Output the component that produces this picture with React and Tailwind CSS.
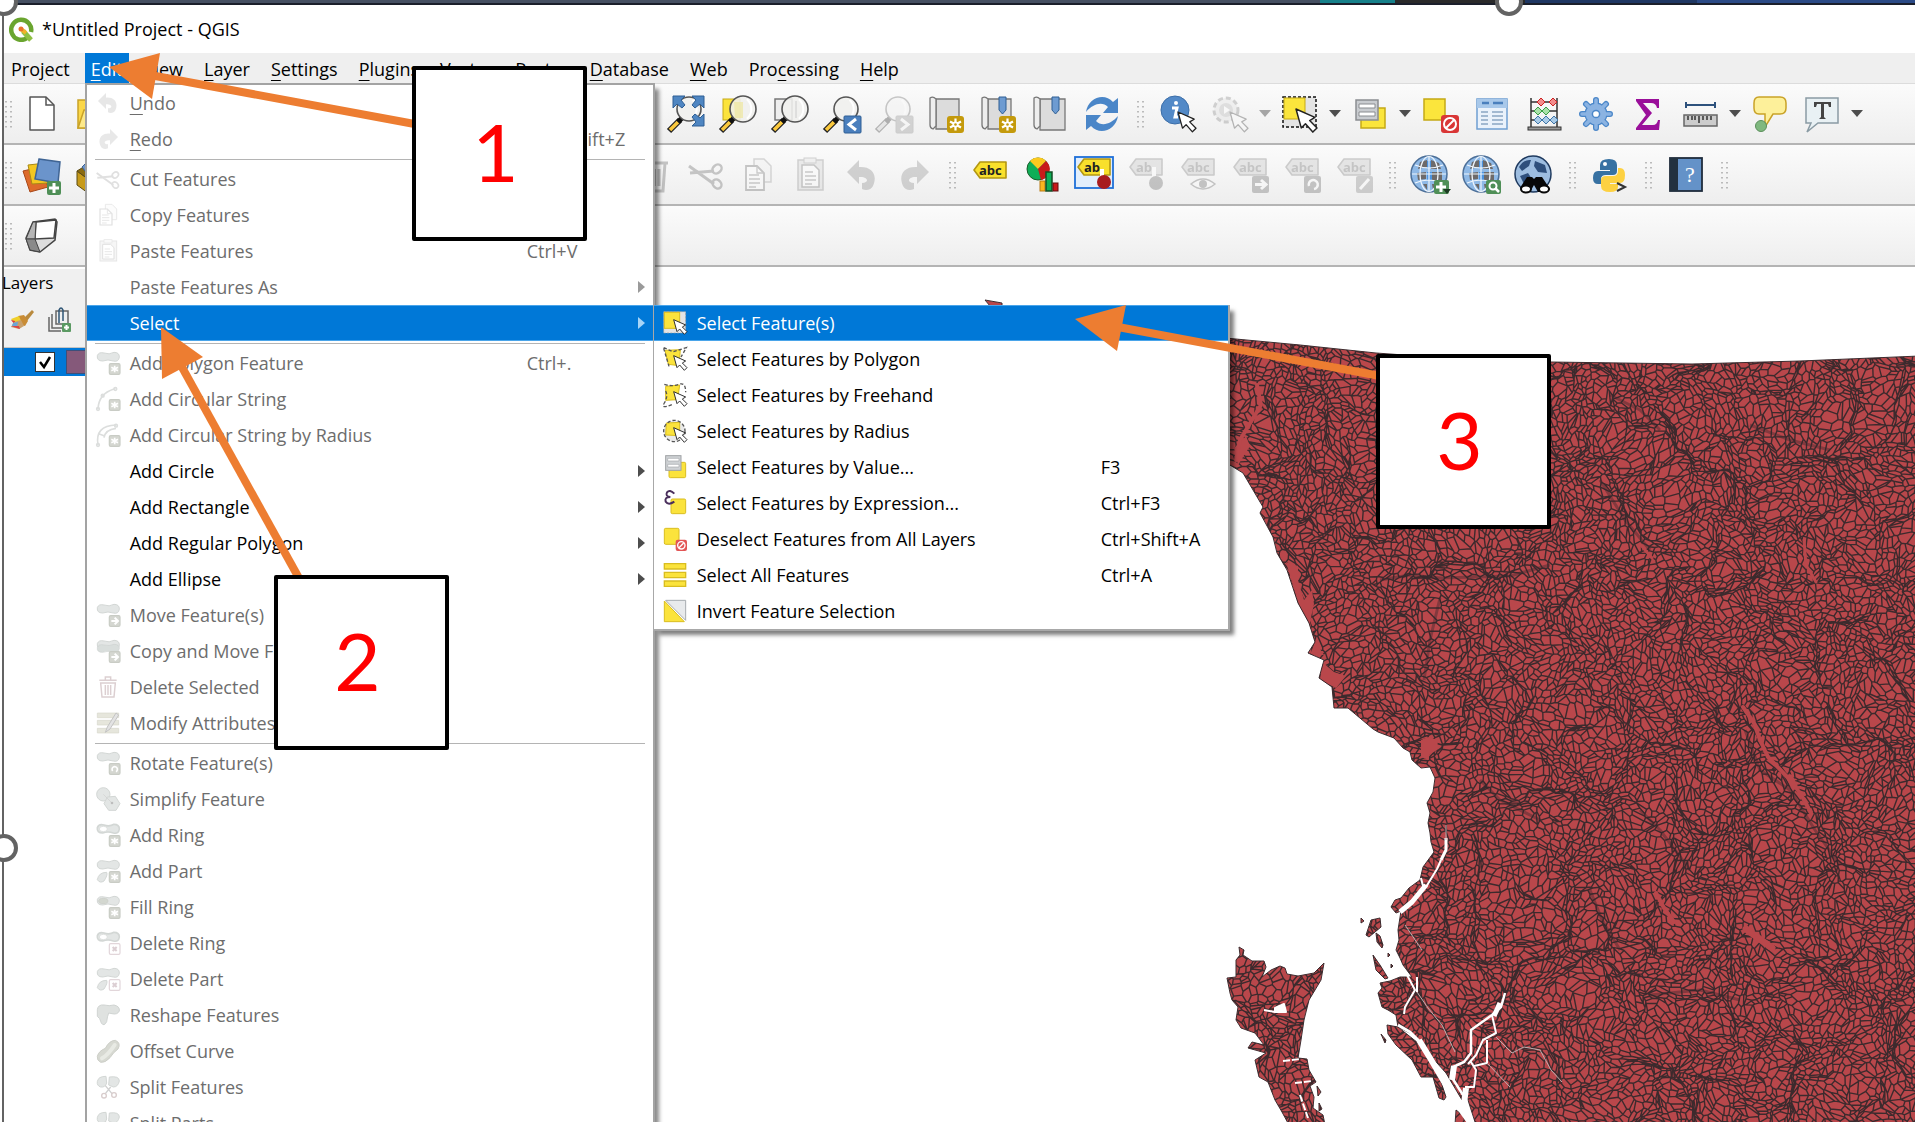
import React from "react";

/* ---------- shared drawing parts ---------- */

function Icon({ children, dim, size = 36 }) {
  return (
    <svg width={size} height={size} viewBox="0 0 36 36" className={dim ? "shrink-0 overflow-visible opacity-30 grayscale" : "shrink-0 overflow-visible"} fill="none" aria-hidden="true">
      {children}
    </svg>
  );
}

function Lens({ cx, cy, r }) {
  return (
    <g>
      <path d="M1 35L12 24" stroke="#222" strokeWidth="6" />
      <path d="M2 34L10 26" stroke="#fbc93d" strokeWidth="3.5" />
      <path d="M10 26L14 22" stroke="#111" strokeWidth="5" />
      <circle cx={cx} cy={cy} r={r} fill="#f0f0ee" fillOpacity="0.88" stroke="#555" strokeWidth="1.6" />
      <path d={`M${cx + r * 0.3} ${cy - r * 0.75}A${r} ${r} 0 0 1 ${cx + r * 0.3} ${cy + r * 0.75}`} stroke="#fff" strokeWidth="2" />
    </g>
  );
}

function StarBadge({ x = 19, y = 19, fill = "#c49a0c" }) {
  return (
    <g transform={`translate(${x} ${y})`}>
      <rect width="17" height="17" rx="3" fill={fill} />
      <path d="M8.5 2.5V14.5M3 5.5L14 11.5M14 5.5L3 11.5" stroke="#fff" strokeWidth="2.2" />
      <circle cx="8.5" cy="8.5" r="3" fill="#fff" />
      <circle cx="8.5" cy="8.5" r="1.3" fill={fill} />
    </g>
  );
}

function Cursor({ x = 16, y = 13, s = 1 }) {
  return <path transform={`translate(${x} ${y}) scale(${s})`} d="M0 0L5 18L9 14L16 22L20 18L13 11L18 8Z" fill="#fff" stroke="#222" strokeWidth="1.4" strokeLinejoin="round" />;
}

function Label({ text = "abc", fill = "#f9e02c", stroke = "#b39712", ink = "#222" }) {
  return (
    <g>
      <path d="M2 10L8 2H34V18H8Z" fill={fill} stroke={stroke} strokeWidth="1.6" strokeLinejoin="round" />
      <text x={text === "ab" ? 8 : 7} y="15" fontFamily="Open Sans, sans-serif" fontWeight="700" fontSize="13" fill={ink}>{text}</text>
    </g>
  );
}

function Globe() {
  return (
    <g>
      <circle cx="17" cy="17" r="18" fill="#8fb9e6" stroke="#4c6f98" strokeWidth="1.5" />
      <path d="M8 5L15 3V10L6 12ZM19 3L27 6L29 12H19ZM5 16L14 15V22L6 23ZM20 15H30V23H20ZM11 27H15V33ZM20 27H26L21 33Z" fill="#6d6a6a" />
      <path d="M15 15H20V23H15ZM15 4H19V11H15Z" fill="#4d94e0" />
      <path d="M17 0V34M0 17H34M3 8Q17 14 31 8M3 26Q17 20 31 26" stroke="#eef5fc" strokeWidth="1.2" />
      <ellipse cx="17" cy="17" rx="9" ry="17.5" stroke="#eef5fc" strokeWidth="1.2" />
    </g>
  );
}

const D = {
  newFile: <Icon><path d="M6 1H22L30 9V34H6Z" fill="#fff" stroke="#555" strokeWidth="1.5" strokeLinejoin="round" /><path d="M22 1V9H30" stroke="#555" strokeWidth="1.5" /></Icon>,
  folder: <Icon><path d="M2 4H16L18 8H34V32H2Z" fill="#fbd748" stroke="#c9a227" strokeWidth="1.5" /><path d="M2 32L8 14H36V32Z" fill="#fde98a" stroke="#c9a227" strokeWidth="1.5" /></Icon>,
  zoomFull: (
    <Icon>
      <Lens cx={21} cy={13} r={12} />
      <g fill="#4f86c2" stroke="#2f5f94" strokeWidth="1">
        <path d="M5 0H17L13 4L17 9L14 12L9 8L5 12Z" />
        <path d="M36 0H24L28 4L24 9L27 12L32 8L36 12Z" />
        <path d="M36 30H24L28 26L24 21L27 18L32 22L36 18Z" />
      </g>
    </Icon>
  ),
  zoomSel: <Icon><rect x="3" y="3" width="17" height="21" fill="#fbe33c" stroke="#c5a916" /><Lens cx={23} cy={13} r={13} /><path d="M14 6H23V22H15Z" fill="#eee7a0" opacity="0.7" /></Icon>,
  zoomLayer: <Icon><rect x="3" y="3" width="17" height="21" fill="#eee" stroke="#777" strokeWidth="1.5" /><Lens cx={23} cy={13} r={13} /><path d="M24 5V22" stroke="#ccc" /></Icon>,
  zoomLast: <Icon><Lens cx={22} cy={13} r={12} /><rect x="20" y="20" width="17" height="17" rx="1" fill="#4a7fbd" stroke="#2f5f94" /><path d="M32 23L25 28.5L32 34" stroke="#fff" strokeWidth="3" /></Icon>,
  zoomNext: <Icon dim><Lens cx={22} cy={13} r={12} /><rect x="20" y="20" width="17" height="17" rx="1" fill="#888" stroke="#777" /><path d="M25 23L32 28.5L25 34" stroke="#fff" strokeWidth="3" /></Icon>,
  newView: <Icon><path d="M8 3H31V33H8Z" fill="#dcdcdc" stroke="#777" strokeWidth="1.3" /><path d="M2 2Q5 0 8 3V30L5 33Q2 32 2 29Z" fill="#eee" stroke="#777" strokeWidth="1.3" /><StarBadge x={19} y={20} /></Icon>,
  newMark: <Icon><path d="M8 3H31V33H8Z" fill="#dcdcdc" stroke="#777" strokeWidth="1.3" /><path d="M2 2Q5 0 8 3V30L5 33Q2 32 2 29Z" fill="#eee" stroke="#777" strokeWidth="1.3" /><path d="M19 1H26V14L22.5 18L19 14Z" fill="#6d9bd1" stroke="#2f5f94" /><StarBadge x={19} y={20} /></Icon>,
  marks: <Icon><path d="M8 3H33V34H8Z" fill="#dcdcdc" stroke="#777" strokeWidth="1.3" /><path d="M2 2Q5 0 8 3V30L5 33Q2 32 2 29Z" fill="#eee" stroke="#777" strokeWidth="1.3" /><path d="M20 1H27V14L23.5 18L20 14Z" fill="#6d9bd1" stroke="#2f5f94" /></Icon>,
  refresh: <Icon><path d="M2 16C4 2 20 -4 29 6L34 2V17H19L24 11C18 5 9 8 2 16Z" fill="#4a86c8" /><path d="M34 20C32 34 16 40 7 30L2 34V19H17L12 25C18 31 27 28 34 20Z" fill="#4a86c8" /></Icon>,
  info: <Icon><circle cx="15" cy="14" r="14" fill="#5289c7" stroke="#3c6ea8" /><circle cx="16" cy="7" r="2" fill="#fff" /><path d="M12 12H17L15 21H18" stroke="#fff" strokeWidth="3" /><Cursor x={18} y={16} s={0.9} /></Icon>,
  action: <Icon dim><circle cx="14" cy="14" r="12" fill="#ddd" stroke="#777" strokeWidth="3" strokeDasharray="5 3" /><circle cx="14" cy="14" r="7" fill="#aaa" /><path d="M12 10L18 14L12 18Z" fill="#fff" /><Cursor x={18} y={16} s={0.9} /></Icon>,
  select: <Icon><rect x="1" y="1" width="33" height="30" fill="#e4e4e4" stroke="#111" strokeWidth="1.5" strokeDasharray="3 2" /><rect x="2" y="2" width="21" height="21" fill="#fbe53c" stroke="#c5a916" /><Cursor x={14} y={13} s={1.05} /></Icon>,
  byValue: <Icon><rect x="9" y="12" width="24" height="20" fill="#fbe53c" stroke="#c5a916" strokeWidth="1.5" /><rect x="4" y="4" width="22" height="20" fill="#c9ccd0" stroke="#8a8d91" strokeWidth="1.5" /><path d="M7 8H23V12H7ZM7 16H23V20H7Z" fill="#fff" stroke="#8a8d91" /></Icon>,
  deselect: <Icon><rect x="2" y="3" width="21" height="21" fill="#fbe53c" stroke="#c5a916" strokeWidth="1.5" /><rect x="19" y="19" width="18" height="18" rx="3" fill="#d93636" /><circle cx="28" cy="28" r="6" stroke="#fff" strokeWidth="2" /><path d="M24 32L32 24" stroke="#fff" strokeWidth="2" /></Icon>,
  table: <Icon><rect x="3" y="3" width="30" height="30" fill="#eaf2fb" stroke="#6f9fd2" strokeWidth="1.5" /><rect x="3" y="3" width="30" height="9" fill="#a8c8ea" /><path d="M8 7H15M19 7H29" stroke="#4a7fbd" strokeWidth="2.5" /><path d="M7 16H14M18 16H29M7 20H14M18 20H29M7 24H14M18 24H29M7 28H14M18 28H29" stroke="#8ba6c4" strokeWidth="1.6" /></Icon>,
  abacus: <Icon><path d="M5 2V31M31 2V31M5 6H31M5 15H31M5 24H31" stroke="#333" strokeWidth="1.5" /><rect x="2" y="31" width="33" height="3" fill="#999" stroke="#333" /><g fill="#f28c8c" stroke="#c22"><path d="M11 6L15 2L19 6L15 10ZM23 6L27 2L31 6L27 10Z" /></g><g fill="#a9e2a9" stroke="#3a9d45"><path d="M8 15L12 11L16 15L12 19ZM16 15L20 11L24 15L20 19Z" /></g><g fill="#a9cbe8" stroke="#4076a8"><path d="M8 24L12 20L16 24L12 28ZM16 24L20 20L24 24L20 28ZM24 24L28 20L32 24L28 28Z" /></g></Icon>,
  gear: <Icon><g stroke="#4a86c8" strokeWidth="6" strokeLinecap="round"><path d="M18 4V32M4 18H32M8 8L28 28M28 8L8 28" /></g><circle cx="18" cy="18" r="11.5" fill="#4a86c8" /><g stroke="#8bb3e2" strokeWidth="3.5" strokeLinecap="round"><path d="M18 4V32M4 18H32M8 8L28 28M28 8L8 28" /></g><circle cx="18" cy="18" r="10.3" fill="#8bb3e2" /><circle cx="18" cy="18" r="3.6" fill="#fff" stroke="#4a86c8" strokeWidth="1.5" /></Icon>,
  sigma: <Icon><path d="M6 3H29V12H27Q26 7 21 7H13L22 17L12 29H23Q27 29 28 24H30L29 34H6V32L16 19L6 5Z" fill="#9a0f9a" /></Icon>,
  measure: <Icon><path d="M4 9H33M4 6V12M33 6V12" stroke="#2d517c" strokeWidth="2" /><rect x="2" y="19" width="33" height="11" fill="#ccc" stroke="#666" strokeWidth="1.5" /><path d="M6 20V24M10 20V24M13 20V24M17 20V27M21 20V24M25 20V24M29 20V24" stroke="#333" strokeWidth="1.5" /></Icon>,
  tips: <Icon><path d="M7 1H28Q34 1 34 7V12Q34 18 28 18H21L13 31V18H7Q2 18 2 12V7Q2 1 7 1Z" fill="#fdf09a" stroke="#c9a227" strokeWidth="1.5" /><circle cx="9" cy="30" r="5.5" fill="#7fb87f" stroke="#5b8f5b" /></Icon>,
  textNote: <Icon><path d="M2 2H34V27H14L3 36L7 27H2Z" fill="#e9f1f4" stroke="#8a9ba4" strokeWidth="1.5" /><path d="M10 6H27V11H25L24 8H20V21L22 23H15L17 21V8H13L12 11H10Z" fill="#444" /></Icon>,

  dataSource: <Icon><path d="M-1 14L16 10L24 30L6 35Z" fill="#dd6b2b" stroke="#a8481a" /><path d="M4 8L22 6L24 26L8 27Z" fill="#f4c720" stroke="#a88a16" /><path d="M15 2L36 5L34 26L11 22Z" fill="#6b94cb" stroke="#3f6494" strokeWidth="1.5" /><rect x="23" y="24" width="14" height="14" rx="2" fill="#4f8f57" /><path d="M30 26V36M25 31H35" stroke="#fff" strokeWidth="3" /></Icon>,
  boxIcon: <Icon><path d="M1 14L12 22V36L1 28Z" fill="#c79a1a" stroke="#5b4a12" /><path d="M12 22L36 14V28L12 36Z" fill="#f4c720" stroke="#5b4a12" /><path d="M1 14L14 6L36 14L12 22Z" fill="#8a6a10" stroke="#5b4a12" /><path d="M6 10L14 2L28 6V14L12 18Z" fill="#6b94cb" stroke="#3f6494" /></Icon>,
  cube: <Icon><path d="M9 4L31 1L33 4L31 22L16 34L6 32L2 20Z" fill="#ddd" stroke="#444" strokeWidth="1.5" /><path d="M12 4L32 2L30 20L11 21Z" fill="#fff" stroke="#444" strokeWidth="1.5" /><path d="M9 4L12 4L11 21L2 21Z" fill="#b5b5b5" stroke="#444" /><path d="M2 21H11L16 34L6 32Z" fill="#8a8a8a" stroke="#444" /></Icon>,
  trash: <Icon dim><path d="M4 6H32M8 6L10 34H27L29 6M14 12V29M18.5 12V29M23 12V29" stroke="#8a3a3a" strokeWidth="3" /></Icon>,
  cut: <Icon dim><path d="M1 9L26 27M2 16L26 14" stroke="#555" strokeWidth="3" /><ellipse cx="29" cy="12" rx="5" ry="4" stroke="#555" strokeWidth="2.5" transform="rotate(-40 29 12)" /><ellipse cx="29" cy="27" rx="5" ry="4" stroke="#555" strokeWidth="2.5" transform="rotate(50 29 27)" /></Icon>,
  copy: <Icon dim><path d="M14 2H24L31 9V25H14Z" fill="#eee" stroke="#888" strokeWidth="1.5" /><path d="M6 9H17L24 16V33H6Z" fill="#fff" stroke="#555" strokeWidth="1.8" /><path d="M9 18H19M9 22H20M9 26H20M9 30H16M17 9V16H24" stroke="#666" strokeWidth="1.3" /></Icon>,
  paste: <Icon dim><rect x="6" y="3" width="25" height="30" fill="#ccc" stroke="#777" strokeWidth="1.5" /><path d="M10 8H22L27 13V30H10Z" fill="#fff" stroke="#555" strokeWidth="1.5" /><rect x="12" y="1" width="12" height="5" fill="#ddd" stroke="#777" /><path d="M13 15H21M13 19H24M13 23H24M13 27H20" stroke="#666" strokeWidth="1.3" /></Icon>,
  undo: <Icon dim><path d="M3 15L15 3V10C28 9 34 18 29 29C27 33 22 34 18 32V26C26 26 24 19 15 20V27Z" fill="#9a7468" /></Icon>,
  redo: <Icon dim><path d="M33 15L21 3V10C8 9 2 18 7 29C9 33 14 34 18 32V26C10 26 12 19 21 20V27Z" fill="#7a8080" /></Icon>,
  abc: <Icon><g transform="translate(0 3)"><Label /></g></Icon>,
  diagram: <Icon><circle cx="14" cy="12" r="11" fill="#0fae57" stroke="#1a5a2a" /><path d="M14 12L6 4A11 11 0 0 1 22 4Z" fill="#fbc91f" /><path d="M14 12L22 4A11 11 0 0 1 17 23Z" fill="#c81a1a" /><rect x="16" y="24" width="5" height="10" fill="#fbb61f" stroke="#b87a12" /><rect x="22" y="15" width="6" height="19" fill="#0fae57" stroke="#124d24" strokeWidth="1.5" /><rect x="29" y="26" width="5" height="8" fill="#c81a1a" stroke="#5e0e0e" /></Icon>,
  pinned: <Icon><rect x="-1" y="0" width="38" height="31" fill="#e2eefb" stroke="#1e6fd8" strokeWidth="1.8" /><Label text="ab" /><path d="M26 12V22" stroke="#fff" strokeWidth="4" /><circle cx="28" cy="25" r="7" fill="#a81c20" /></Icon>,
};

const grayLabel = <Label fill="#bfbca8" stroke="#6d6a58" ink="#555" />;
D.lab1 = <Icon dim><Label text="ab" fill="#bfbca8" stroke="#6d6a58" ink="#555" /><path d="M26 10V20" stroke="#fff" strokeWidth="4" /><circle cx="28" cy="26" r="7" fill="#7a4a4a" /></Icon>;
D.lab2 = <Icon dim>{grayLabel}<path d="M11 27Q23 17 35 27Q23 37 11 27Z" fill="#fff" stroke="#555" strokeWidth="1.5" /><circle cx="23" cy="27" r="4" fill="#555" /></Icon>;
D.lab3 = <Icon dim>{grayLabel}<rect x="20" y="19" width="17" height="17" rx="2" fill="#555" /><path d="M23 27.5H33M29 23L34 27.5L29 32" stroke="#fff" strokeWidth="3" /></Icon>;
D.lab4 = <Icon dim>{grayLabel}<rect x="20" y="19" width="17" height="17" rx="2" fill="#555" /><path d="M25 29A4.5 4.5 0 1 1 30 32" stroke="#fff" strokeWidth="2.5" /></Icon>;
D.lab5 = <Icon dim>{grayLabel}<rect x="20" y="19" width="17" height="17" rx="2" fill="#777" /><path d="M24 32L33 22" stroke="#fff" strokeWidth="3" /></Icon>;
D.globeAdd = <Icon><Globe /><rect x="22" y="23" width="15" height="14" rx="2" fill="#4f8f57" /><path d="M29 25V35M24 30H34" stroke="#fff" strokeWidth="3" /><path d="M31 32H39L35 37Z" fill="#1d3b22" /></Icon>;
D.globeFind = <Icon><Globe /><rect x="22" y="23" width="15" height="14" rx="2" fill="#4f8f57" /><circle cx="29" cy="29" r="3.5" stroke="#fff" strokeWidth="2" /><path d="M31 31L35 35" stroke="#fff" strokeWidth="2.5" /></Icon>;
D.globeBin = <Icon><circle cx="17" cy="17" r="18" fill="#9dbde0" stroke="#1f3a5f" strokeWidth="1.5" /><path d="M3 10Q8 2 15 3L13 9L6 14ZM19 4L29 8L31 16L22 15L18 9ZM4 19L12 16L16 22L8 27Z" fill="#2e4f7c" /><path d="M11 20H16L18 22L20 20H26L34 32L32 35H22L18 28L14 35H6L4 31Z" fill="#080808" /><ellipse cx="10" cy="32" rx="5" ry="3.5" fill="#fff" stroke="#080808" strokeWidth="2" /><ellipse cx="28" cy="32" rx="5" ry="3.5" fill="#fff" stroke="#080808" strokeWidth="2" /></Icon>;
D.python = <Icon><path d="M17 2Q8 2 8 8V13H18V14H6Q1 14 1 21Q1 27 6 27H9V22Q9 18 14 18H21Q25 18 25 14V8Q25 2 17 2Z" fill="#3771a2" /><path d="M18 35Q9 35 9 29V23Q9 19 14 19H21Q26 19 26 14V11H28Q33 11 33 18Q33 26 28 26H18V27H26V30Q26 35 18 35Z" fill="#fdd142" /><circle cx="13" cy="7" r="2" fill="#fff" /><path d="M25 26L33 30L25 34" stroke="#333" strokeWidth="2" /></Icon>;
D.help = <Icon><rect x="2" y="1" width="32" height="33" fill="#6492c8" stroke="#1f2c3b" strokeWidth="1.8" /><rect x="2" y="1" width="8" height="33" fill="#22313f" /><text x="17" y="25" fontFamily="Liberation Serif, serif" fontSize="22" fill="#fff">?</text></Icon>;

/* ---------- toolbars ---------- */

function Tool({ name, icon }) {
  return (
    <button type="button" aria-label={name} className="flex h-9 w-[52px] shrink-0 items-center justify-center">
      {icon}
    </button>
  );
}

function Handle() {
  return (
    <span className="flex w-6 shrink-0 justify-center">
      <svg width="8" height="28" viewBox="0 0 8 28" aria-hidden="true">
        <path d="M2 1V28M7 1V28" stroke="#a8a8a8" strokeWidth="1.5" strokeDasharray="1.5 3.5" />
      </svg>
    </span>
  );
}

function Drop({ dim }) {
  return (
    <button type="button" aria-label="More options" className="flex w-[18px] shrink-0 items-center justify-center">
      <svg width="12" height="7" viewBox="0 0 12 7" aria-hidden="true"><path d="M0 0H12L6 7Z" fill={dim ? "#a5a5a5" : "#4d4d4d"} /></svg>
    </button>
  );
}

function Bar({ children }) {
  return (
    <div className="flex h-[61px] items-center overflow-hidden border-b-2 border-[#b4b4b4] bg-linear-to-b from-[#fbfbfb] to-[#eeeeee]">
      {children}
    </div>
  );
}

function Toolbars() {
  return (
    <div>
      <Bar>
        <div className="-ml-2 flex w-[664px] shrink-0 items-center">
          <Handle /><span className="-ml-1 flex"><Tool name="New project" icon={D.newFile} /><Tool name="Open project" icon={D.folder} /></span>
        </div>
        <Tool name="Zoom full" icon={D.zoomFull} />
        <Tool name="Zoom to selection" icon={D.zoomSel} />
        <Tool name="Zoom to layer" icon={D.zoomLayer} />
        <Tool name="Zoom last" icon={D.zoomLast} />
        <Tool name="Zoom next" icon={D.zoomNext} />
        <Tool name="New map view" icon={D.newView} />
        <Tool name="New bookmark" icon={D.newMark} />
        <Tool name="Show bookmarks" icon={D.marks} />
        <Tool name="Refresh" icon={D.refresh} />
        <Handle />
        <Tool name="Identify features" icon={D.info} />
        <Tool name="Run feature action" icon={D.action} />
        <Drop dim />
        <Tool name="Select features" icon={D.select} />
        <Drop />
        <Tool name="Select by value" icon={D.byValue} />
        <Drop />
        <Tool name="Deselect features" icon={D.deselect} />
        <Tool name="Open attribute table" icon={D.table} />
        <Tool name="Field calculator" icon={D.abacus} />
        <Tool name="Processing toolbox" icon={D.gear} />
        <Tool name="Statistical summary" icon={D.sigma} />
        <Tool name="Measure line" icon={D.measure} />
        <Drop />
        <Tool name="Map tips" icon={D.tips} />
        <Tool name="Text annotation" icon={D.textNote} />
        <Drop />
      </Bar>
      <Bar>
        <div className="-ml-2 flex w-[684px] shrink-0 items-center">
          <Handle /><span className="-ml-1 flex"><Tool name="Data source manager" icon={D.dataSource} /><Tool name="New geopackage" icon={D.boxIcon} /></span>
          <span className="ml-auto flex"><Tool name="Delete selected" icon={D.trash} /></span>
        </div>
        <Tool name="Cut features" icon={D.cut} />
        <Tool name="Copy features" icon={D.copy} />
        <Tool name="Paste features" icon={D.paste} />
        <Tool name="Undo" icon={D.undo} />
        <Tool name="Redo" icon={D.redo} />
        <Handle />
        <Tool name="Labeling options" icon={D.abc} />
        <Tool name="Diagram options" icon={D.diagram} />
        <Tool name="Highlight pinned labels" icon={D.pinned} />
        <Tool name="Pin labels" icon={D.lab1} />
        <Tool name="Show labels" icon={D.lab2} />
        <Tool name="Move label" icon={D.lab3} />
        <Tool name="Rotate label" icon={D.lab4} />
        <Tool name="Change label" icon={D.lab5} />
        <Handle />
        <Tool name="Add web service" icon={D.globeAdd} />
        <Tool name="Search web services" icon={D.globeFind} />
        <Tool name="MetaSearch" icon={D.globeBin} />
        <Handle />
        <Tool name="Python console" icon={D.python} />
        <Handle />
        <Tool name="Help contents" icon={D.help} />
        <Handle />
      </Bar>
      <Bar>
        <div className="-ml-2 flex items-center"><Handle /><span className="-ml-1 flex"><Tool name="Mesh digitizing" icon={D.cube} /></span></div>
      </Bar>
    </div>
  );
}

/* ---------- menu icons ---------- */

const blobFill = { fill: "#e3e6e5", stroke: "#d3d7d5", strokeWidth: 1.5 };
const BLOB = "M2 7Q4 1 12 3Q20 6 27 2Q35 2 35 9Q34 17 26 15Q18 12 10 15Q1 15 2 7Z";

function Edit({ kind, badge }) {
  return (
    <svg width="24" height="24" viewBox="0 0 36 36" fill="none" className="overflow-visible" aria-hidden="true">
      {kind === "blob" && <path d={BLOB} {...blobFill} />}
      {kind === "blob2" && <g><path d={BLOB} {...blobFill} /><path d="M2 13Q4 7 12 9Q20 11 27 8Q35 8 35 14Q34 21 26 20Q18 17 10 20Q1 20 2 13Z" fill="#d9dedc" stroke="#cdd2d0" /></g>}
      {kind === "ring" && <g><path d={BLOB} {...blobFill} strokeWidth="2.5" /><ellipse cx="11" cy="9" rx="6" ry="4" fill="#fff" stroke="#d3d7d5" /></g>}
      {kind === "fill" && <g><path d={BLOB} {...blobFill} /><ellipse cx="11" cy="9" rx="7" ry="4" fill="#d3d7d0" stroke="#c8ccc5" /></g>}
      {kind === "part" && <g><path d={BLOB} {...blobFill} /><path d="M2 31Q4 20 16 20Q18 24 12 33Q6 37 2 31Z" {...blobFill} /></g>}
      {kind === "arc" && <g stroke="#dcdedd" strokeWidth="2.5"><path d="M3 33Q4 10 27 3" /><circle cx="3" cy="33" r="2" /><circle cx="10" cy="13" r="2" /><circle cx="29" cy="3" r="2" /></g>}
      {kind === "arc2" && <g stroke="#dcdedd" strokeWidth="2.5"><path d="M3 33Q-2 4 30 3M12 22Q14 10 30 8M4 16L14 20" /><circle cx="3" cy="33" r="2" /><circle cx="30" cy="4" r="2" /></g>}
      {kind === "simplify" && <g><circle cx="11" cy="11" r="10" {...blobFill} /><path d="M17 15L29 14L36 25L30 35H19L12 25Z" {...blobFill} /><path d="M11 11L24 24" stroke="#cfcfcf" /><circle cx="24" cy="24" r="2" fill="#bdbdbd" /></g>}
      {kind === "reshape" && <path d="M2 10Q3 2 12 3Q20 5 27 3Q36 5 35 12Q32 18 24 16L19 15Q17 20 16 28Q12 36 8 30Q6 22 2 20Z" fill="#dfe2e0" stroke="#d0d4d2" strokeWidth="1.5" />}
      {kind === "offset" && <g><path d="M2 26Q4 18 14 14Q20 2 29 2Q38 6 33 15Q26 20 21 28Q14 36 7 35Q1 32 2 26Z" fill="#d7d9d2" stroke="#cdcfc8" strokeWidth="1.5" /><path d="M9 29Q18 24 28 9" stroke="#e8eae4" strokeWidth="6" strokeLinecap="round" /></g>}
      {kind === "split" && <g><path d="M2 10Q3 2 15 2L16 12Q14 19 7 18Q1 16 2 10Z" {...blobFill} /><path d="M20 3Q35 1 35 9Q33 18 26 18L19 15Z" {...blobFill} /><path d="M14 16L24 28M22 18L14 28" stroke="#d0d0d0" strokeWidth="2" /><circle cx="12" cy="31" r="3.5" stroke="#d8cccc" strokeWidth="2" /><circle cx="27" cy="30" r="3.5" stroke="#d8cccc" strokeWidth="2" /></g>}
      {kind === "trash" && <g stroke="#dccfd1" strokeWidth="2.2"><path d="M5 8H31M14 7V3H22V7M7 12L9 33H27L29 12ZM14 15V30M18 15V30M22 15V30" /></g>}
      {kind === "modify" && <g><path d="M2 3H34V10H2ZM2 14H34V21H2ZM2 26H34V33H2Z" fill="#e6e6dc" stroke="#d8d8cc" /><path d="M14 32L17 24L30 3L34 6L21 27Z" fill="#e3e3e3" stroke="#c4c4c4" strokeWidth="1.5" /></g>}
      {badge && <rect x="20" y="19" width="16" height="16" rx="2" fill={badge === "x" ? "#fff" : "#d5d7d1"} stroke={badge === "x" ? "#e2d6da" : "#c9ccc5"} strokeWidth="1.8" />}
      {badge === "star" && <path d="M28 22V32M23 24.5L33 29.5M33 24.5L23 29.5" stroke="#fff" strokeWidth="2.5" />}
      {badge === "move" && <path d="M23 27H32M28 22L33 27L28 32" stroke="#fff" strokeWidth="3" />}
      {badge === "turn" && <path d="M25 30A4 4 0 1 1 30 31" stroke="#fff" strokeWidth="2.5" />}
      {badge === "x" && <path d="M25 24L31 30M31 24L25 30" stroke="#dccfd3" strokeWidth="3" />}
    </svg>
  );
}

function Mini({ children }) {
  return <svg width="24" height="24" viewBox="0 0 36 36" fill="none" className="overflow-visible" aria-hidden="true">{children}</svg>;
}
const yellow = { fill: "#fbe33c", stroke: "#d9bd20", strokeWidth: 1.5 };
const dash = { stroke: "#555", strokeWidth: 2, strokeDasharray: "5 3" };

const S = {
  select: <Mini><rect x="1" y="1" width="33" height="32" fill="#e4e4e4" stroke="#999" strokeDasharray="3 2" /><rect x="2" y="2" width="23" height="24" {...yellow} /><Cursor x={16} y={13} /></Mini>,
  polygon: <Mini><path d="M3 5L26 4L24 28L8 26Z" {...yellow} /><path d="M1 1L15 7L35 1L27 15M1 2L9 29" {...dash} /><Cursor x={16} y={13} /></Mini>,
  freehand: <Mini><path d="M4 5L25 3L22 25L4 26Z" {...yellow} /><path d="M2 2Q14 6 24 2T34 14M4 12Q8 20 2 30T14 32" {...dash} /><Cursor x={16} y={13} /></Mini>,
  radius: <Mini><circle cx="17" cy="18" r="16" fill="#e9e9e9" /><path d="M5 6L25 5L25 25L4 24Z" {...yellow} /><circle cx="17" cy="18" r="16" {...dash} /><Cursor x={16} y={13} /></Mini>,
  value: <Mini><rect x="9" y="11" width="25" height="23" rx="2" {...yellow} /><rect x="4" y="1" width="23" height="22" fill="#cfd2d5" stroke="#9fa2a5" strokeWidth="1.5" /><path d="M7 5H24V9H7ZM7 14H24V18H7Z" fill="#fff" stroke="#a5a8ab" /></Mini>,
  expr: <Mini><rect x="12" y="12" width="22" height="22" rx="2" {...yellow} /><path d="M17 4Q10 -3 6 2Q3 8 11 9Q2 9 4 16Q8 22 17 16" stroke="#4a2f5c" strokeWidth="3" /></Mini>,
  deselect: <Mini><rect x="2" y="2" width="22" height="24" rx="2" {...yellow} /><rect x="19" y="19" width="17" height="17" rx="3" fill="#e25555" /><circle cx="27.5" cy="27.5" r="5.5" stroke="#fff" strokeWidth="2" /><path d="M24 31L31 24" stroke="#fff" strokeWidth="2" /></Mini>,
  all: <Mini><path d="M2 1H34V9H2ZM2 14H34V22H2ZM2 27H34V35H2Z" {...yellow} strokeWidth="2" /></Mini>,
  invert: <Mini><path d="M4 2H34V32Z" fill="#e8eaec" stroke="#a7abb0" strokeWidth="1.5" /><path d="M2 3L32 34H2Z" {...yellow} /></Mini>,
};

/* ---------- menus ---------- */

const FEATURE_ITEMS = [
  { icon: S.select, label: "Select Feature(s)", on: true },
  { icon: S.polygon, label: "Select Features by Polygon" },
  { icon: S.freehand, label: "Select Features by Freehand" },
  { icon: S.radius, label: "Select Features by Radius" },
  { icon: S.value, label: "Select Features by Value...", keys: "F3" },
  { icon: S.expr, label: "Select Features by Expression...", keys: "Ctrl+F3" },
  { icon: S.deselect, label: "Deselect Features from All Layers", keys: "Ctrl+Shift+A" },
  { icon: S.all, label: "Select All Features", keys: "Ctrl+A" },
  { icon: S.invert, label: "Invert Feature Selection" },
];

function MiniDim({ of }) {
  return <svg width="24" height="24" viewBox="0 0 36 36" className="opacity-60" aria-hidden="true">{of}</svg>;
}

const EDIT_ITEMS = [
  { icon: <MiniDim of={D.undo} />, label: "Undo", key: true, off: true },
  { icon: <MiniDim of={D.redo} />, label: "Redo", key: true, keys: "Ctrl+Shift+Z", off: true },
  { line: true },
  { icon: <MiniDim of={D.cut} />, label: "Cut Features", off: true },
  { icon: <MiniDim of={D.copy} />, label: "Copy Features", off: true },
  { icon: <MiniDim of={D.paste} />, label: "Paste Features", keys: "Ctrl+V", off: true },
  { label: "Paste Features As", off: true, more: true },
  { label: "Select", on: true, more: true, sub: FEATURE_ITEMS },
  { line: true },
  { icon: <Edit kind="blob" badge="star" />, label: "Add Polygon Feature", keys: "Ctrl+.", off: true },
  { icon: <Edit kind="arc" badge="star" />, label: "Add Circular String", off: true },
  { icon: <Edit kind="arc2" badge="star" />, label: "Add Circular String by Radius", off: true },
  { label: "Add Circle", more: true },
  { label: "Add Rectangle", more: true },
  { label: "Add Regular Polygon", more: true },
  { label: "Add Ellipse", more: true },
  { icon: <Edit kind="blob" badge="move" />, label: "Move Feature(s)", off: true },
  { icon: <Edit kind="blob2" badge="move" />, label: "Copy and Move Feature(s)", off: true },
  { icon: <Edit kind="trash" />, label: "Delete Selected", off: true },
  { icon: <Edit kind="modify" />, label: "Modify Attributes", off: true },
  { line: true },
  { icon: <Edit kind="blob" badge="turn" />, label: "Rotate Feature(s)", off: true },
  { icon: <Edit kind="simplify" />, label: "Simplify Feature", off: true },
  { icon: <Edit kind="ring" badge="star" />, label: "Add Ring", off: true },
  { icon: <Edit kind="part" badge="star" />, label: "Add Part", off: true },
  { icon: <Edit kind="fill" badge="star" />, label: "Fill Ring", off: true },
  { icon: <Edit kind="ring" badge="x" />, label: "Delete Ring", off: true },
  { icon: <Edit kind="part" badge="x" />, label: "Delete Part", off: true },
  { icon: <Edit kind="reshape" />, label: "Reshape Features", off: true },
  { icon: <Edit kind="offset" />, label: "Offset Curve", off: true },
  { icon: <Edit kind="split" />, label: "Split Features", off: true },
  { icon: <Edit kind="split" />, label: "Split Parts", off: true },
];

function MenuRow({ item, wide }) {
  if (item.line) {
    return <li role="separator" className="flex h-1 items-center px-2"><span className="h-px w-full bg-[#b4b4b4]" /></li>;
  }
  const tone = item.on ? "border-[#4aa5ea] bg-[#0078d7] text-white" : item.off ? "border-transparent text-[#6d6d6d]" : "border-transparent text-black";
  return (
    <li role="none" className="relative">
      <button type="button" role="menuitem" aria-disabled={item.off ? "true" : undefined} className={"flex h-9 w-full items-center border-y text-left whitespace-nowrap " + tone}>
        <span className="flex w-[43px] shrink-0 justify-center">{item.icon}</span>
        <span className="flex-1">
          {item.key ? <><span className="underline underline-offset-4">{item.label[0]}</span>{item.label.slice(1)}</> : item.label}
        </span>
        <span className={wide ? "w-[127px]" : "w-[104px]"}>{item.keys}</span>
        {!wide && (
          <span className="flex w-[22px] justify-center">
            {item.more && <svg width="7" height="12" viewBox="0 0 7 12" aria-hidden="true"><path d="M0 0L7 6L0 12Z" fill={item.on ? "#a6d4f7" : item.off ? "#9a9a9a" : "#4d4d4d"} /></svg>}
          </span>
        )}
      </button>
      {item.sub && (
        <ul role="menu" aria-label={item.label} className="absolute top-0 left-full w-[577px] border-r-2 border-b-2 border-l border-[#a8a8a8] bg-white shadow-[5px_5px_4px_-1px_rgba(0,0,0,0.5)]">
          {item.sub.map((s) => <MenuRow key={s.label} item={s} wide />)}
        </ul>
      )}
    </li>
  );
}

function EditMenu() {
  return (
    <ul role="menu" aria-label="Edit" className="absolute top-full left-0 z-20 w-[570px] border-2 border-[#a3a3a3] bg-white text-lg leading-6 shadow-[5px_5px_4px_-1px_rgba(0,0,0,0.45)]">
      {EDIT_ITEMS.map((it, i) => <MenuRow key={i} item={it} />)}
    </ul>
  );
}

const MENUS = [["Pro", "j", "ect"], ["", "E", "dit"], ["", "V", "iew"], ["", "L", "ayer"], ["", "S", "ettings"], ["", "P", "lugins"], ["Vect", "o", "r"], ["", "R", "aster"], ["", "D", "atabase"], ["", "W", "eb"], ["Pro", "c", "essing"], ["", "H", "elp"]];

function MenuBar() {
  return (
    <nav className="flex h-[31px] gap-[9px] border-b border-[#dcdcdc] bg-[#efefef] pl-px text-lg leading-6">
      {MENUS.map((m) => {
        const open = m[1] === "E";
        return (
          <div key={m.join("")} className="relative">
            <button type="button" aria-haspopup="menu" className={"h-[31px] px-1.5 whitespace-nowrap " + (open ? "bg-[#0078d7] text-white" : "text-black")}>
              {m[0]}<span className="underline underline-offset-4">{m[1]}</span>{m[2]}
            </button>
            {open && <EditMenu />}
          </div>
        );
      })}
    </nav>
  );
}

/* ---------- layers panel ---------- */

function Layers() {
  return (
    <aside className="flex w-[652px] shrink-0 flex-col bg-white text-[17px] leading-6">
      <div className="flex h-[79px] flex-col border-b border-[#c4c4c4] bg-[#f0f0f0]">
        <h2 className="-ml-0.5 pt-0.5">Layers</h2>
        <div className="flex gap-3.5 pt-3 pl-1.5">
          <button type="button" aria-label="Layer styling">
            <svg width="24" height="26" viewBox="0 0 24 26" aria-hidden="true">
              <path d="M22 3L24 5L17 14L14 11Z" fill="#b98a3e" /><path d="M8 9L14 8L18 14L15 19L8 17Z" fill="#c98c35" />
              <path d="M1 12L9 9L11 14L4 16Z" fill="#f0d02c" /><path d="M1 13L5 14L5 18Z" fill="#de3b3b" /><path d="M4 15L11 13L14 19L9 22L1 20Z" fill="#c9a06a" /><path d="M3 16L8 15L7 20L2 19Z" fill="#6aa5d8" /><path d="M1 19L9 19L10 22Z" fill="#d44" />
            </svg>
          </button>
          <button type="button" aria-label="Add group">
            <svg width="24" height="26" viewBox="0 0 24 26" fill="none" aria-hidden="true">
              <path d="M1 10V24H13M4 7V21H15M8 4H20V17H8Z" stroke="#666" strokeWidth="1.5" /><path d="M11 16V3Q13 -1 15 3V14" stroke="#2f5575" strokeWidth="1.5" />
              <rect x="14" y="16" width="9" height="9" rx="1" fill="#5b9a63" /><path d="M18.5 18V23M16 20.5H21" stroke="#fff" strokeWidth="2" />
            </svg>
          </button>
        </div>
      </div>
      <label className="flex h-7 items-center bg-[#0078d7] pl-[31px]">
        <span className="relative flex h-5 w-5">
          <input type="checkbox" defaultChecked aria-label="Layer visible" className="h-5 w-5 appearance-none border border-[#333] bg-white" />
          <svg width="20" height="20" viewBox="0 0 20 20" fill="none" className="pointer-events-none absolute inset-0" aria-hidden="true"><path d="M5 10L9 15L15 5" stroke="#000" strokeWidth="2.5" /></svg>
        </span>
        <span className="ml-[11px] h-6 w-6 border border-[#3d4f7a] bg-[#85597a]" />
      </label>
    </aside>
  );
}

/* ---------- map ---------- */

const X0 = 1190, Y0 = 300, STEP = 6, COLS = 130, ROWS = 146;

function hash(a, b, c) {
  let h = (a * 374761393 + b * 668265263 + c * 974634777) | 0;
  h = Math.imul(h ^ (h >>> 13), 1274126177);
  h = Math.imul(h ^ (h >>> 15), 2246822519);
  return ((h ^ (h >>> 16)) >>> 0) / 4294967296;
}

function noise(x, y, seed) {
  const i = Math.floor(x), j = Math.floor(y);
  const u = x - i, v = y - j;
  const su = u * u * (3 - 2 * u), sv = v * v * (3 - 2 * v);
  const a = hash(i, j, seed), b = hash(i + 1, j, seed), c = hash(i, j + 1, seed), d = hash(i + 1, j + 1, seed);
  return a + (b - a) * su + (c - a) * sv + (a - b - c + d) * su * sv - 0.5;
}

function warp(x, y) {
  return [
    x + 14 * noise(x / 21, y / 21, 5) + 7 * noise(x / 9, y / 9, 6) + 20 * noise(x / 55, y / 55, 9),
    y + 14 * noise(x / 21, y / 21, 7) + 7 * noise(x / 9, y / 9, 8) + 20 * noise(x / 55, y / 55, 10),
  ];
}

function buildCells() {
  const site = (i, j) => [X0 + (i + hash(i, j, 1) * 1.1) * STEP, Y0 + (j + hash(i, j, 2) * 1.1) * STEP];
  const out = [];
  for (let j = 0; j < ROWS; j++) {
    for (let i = 0; i < COLS; i++) {
      const [px, py] = site(i, j);
      const R = STEP * 2.2;
      let poly = [[px - R, py - R], [px + R, py - R], [px + R, py + R], [px - R, py + R]];
      for (let dj = -2; dj <= 2; dj++) {
        for (let di = -2; di <= 2; di++) {
          if (!di && !dj) continue;
          const [qx, qy] = site(i + di, j + dj);
          const nx = qx - px, ny = qy - py, c = (qx * qx + qy * qy - px * px - py * py) / 2;
          const next = [];
          for (let k = 0; k < poly.length; k++) {
            const a = poly[k], b = poly[(k + 1) % poly.length];
            const fa = a[0] * nx + a[1] * ny - c, fb = b[0] * nx + b[1] * ny - c;
            if (fa <= 0) next.push(a);
            if (fa * fb < 0) {
              const t = fa / (fa - fb);
              next.push([a[0] + (b[0] - a[0]) * t, a[1] + (b[1] - a[1]) * t]);
            }
          }
          poly = next;
        }
      }
      if (poly.length > 2) out.push("M" + poly.map((p) => warp(p[0], p[1]).map((v) => v.toFixed(1)).join(" ")).join("L") + "Z");
    }
  }
  return out.join("");
}

const CELLS = buildCells();

const LAND = [
  "M1225 338L1300 345L1376 353L1460 359L1551 362L1692 364L1800 361L1920 356V1125H1476L1467 1097L1462 1100L1446 1073L1428 1053L1414 1035L1398 1027L1396 1015L1388 1010L1382 1007L1380 1000L1378 993L1382 988L1380 983L1390 981L1400 977L1412 977L1403 965L1400 958L1396 950L1399 940L1398 930L1401 911L1396 913L1391 907L1395 900L1401 898L1409 888L1420 880L1423 867L1434 852L1431 842L1430 833L1428 823L1430 813L1427 803L1433 792L1435 778L1430 767L1421 768L1412 760L1410 752L1403 748L1394 738L1378 732L1373 729L1348 708H1334L1332 687L1319 678L1324 660L1308 653L1315 642L1309 623L1298 603L1287 570L1277 553L1273 537L1260 513L1263 507L1243 473L1225 462Z",
  "M1387 1025L1398 1027L1423 1047L1432 1060L1437 1070L1446 1097L1444 1100L1439 1098L1433 1077L1421 1077L1412 1060L1396 1045L1388 1034Z",
  "M1456 1110L1464 1116L1472 1125H1455Z",
  "M1371 920L1380 918L1381 927L1369 937L1366 935Z",
  "M1376 933L1380 936L1383 945L1382 948L1377 942Z",
  "M1361 918L1364 921L1361 923Z",
  "M1373 955L1380 965L1388 978L1385 979L1376 970Z",
  "M1381 1034L1386 1040L1385 1043Z",
  "M1388 953L1390 955L1388 957ZM1391 964L1393 966L1391 968ZM1317 1086L1321 1092L1318 1096ZM1319 1103L1322 1109L1319 1111Z",
  "M1239 947L1244 950L1243 955L1252 961L1264 961L1266 967L1262 977L1271 970L1280 966L1285 968L1287 974L1298 976L1314 973L1324 963L1321 980L1315 990L1309 1000L1304 1020L1301 1040L1298 1058L1307 1059L1309 1070L1316 1082L1310 1086L1314 1097L1313 1108L1323 1115L1325 1125H1289L1282 1112L1275 1100L1268 1082L1259 1077L1255 1060L1266 1053L1248 1048L1252 1042L1264 1045L1255 1033L1241 1028L1236 1020L1238 1007L1232 1000L1230 993L1227 978L1236 977L1236 960L1240 955Z",
  "M985 300L1002 303V306H990Z",
].join("");

function Map() {
  return (
    <svg viewBox="656 269 1259 853" preserveAspectRatio="xMinYMin slice" fill="none" className="min-w-0 flex-1 bg-white" role="img" aria-label="Watershed polygons">
      <clipPath id="land"><path d={LAND} /></clipPath>
      <g clipPath="url(#land)">
        <path d={LAND} fill="#b9474b" />
        <path d={CELLS} stroke="#3c2a2d" strokeWidth="1.4" strokeLinejoin="round" />
        <g fill="#b9474b">
          <path d="M1421 740L1428 737L1438 740L1437 750L1429 755V760L1421 757Z" />
          <path d="M1286 562L1298 566L1298 580L1304 600L1312 590L1314 604L1310 622L1314 640L1324 655L1310 655L1315 642L1298 603Z" />
          <path d="M1322 662L1334 672L1346 676L1336 688L1320 680ZM1238 465L1234 448L1246 436L1250 446Z" />
        </g>
        <g stroke="#b9474b" strokeLinejoin="round" strokeLinecap="round">
          <path d="M1257 385L1261 405L1252 420L1240 440L1236 460" strokeWidth="4" />
          <path d="M1743 707L1754 723L1760 740L1768 757L1793 783L1803 798L1811 813" strokeWidth="4" />
          <path d="M1790 778L1794 786M1746 929L1772 948" strokeWidth="7" />
          <path d="M1656 893L1664 908L1674 922" strokeWidth="4" />
          <path d="M1804 540L1806 565L1816 582M1640 544L1652 558" strokeWidth="3" />
        </g>
        <g stroke="#33262a" strokeOpacity="0.4" strokeWidth="3" strokeLinejoin="round">
          <path d="M1440 598L1430 640L1424 680M1600 480L1625 520L1650 550M1610 395L1640 410L1660 430M1750 425L1790 440L1830 450M1745 730L1760 770L1790 790L1815 830L1840 865" />
          <path d="M1380 580L1410 575L1440 578L1510 576L1550 565M1480 780L1500 800L1540 820M1640 810L1660 830L1690 870M1590 890L1602 920L1620 950M1650 995L1700 990L1740 1000" />
        </g>
      </g>
      <path d={LAND} stroke="#3c2a2d" strokeWidth="1" />
      <g stroke="#fff" strokeLinejoin="round">
        <path d="M1446 838V850L1441 860" strokeWidth="3" />
        <path d="M1441 860L1437 869L1426 887" strokeWidth="2" />
        <path d="M1426 885L1412 902L1400 912" strokeWidth="5" />
        <path d="M1421 878L1424 890" strokeWidth="2" />
        <path d="M1407 975L1415 990L1405 1007L1404 1014M1417 977V992" strokeWidth="2" />
        <path d="M1398 1025L1410 1032L1420 1042" strokeWidth="3" />
        <path d="M1419 1040L1430 1058L1446 1085L1460 1108L1472 1125" strokeWidth="6" />
        <path d="M1505 993L1501 1007L1492 1015L1471 1030V1053L1464 1062L1453 1067L1451 1076L1463 1095" strokeWidth="2.5" />
        <path d="M1500 1003L1494 1016" strokeWidth="5" />
        <path d="M1454 1066L1452 1080M1466 1088L1464 1104" strokeWidth="6" />
        <path d="M1492 1015L1496 1033L1483 1040L1476 1055L1468 1064M1471 1062L1476 1070L1474 1087L1465 1087M1487 1040V1063L1474 1066" strokeWidth="2" />
        <path d="M1264 1010L1275 1012M1275 1008L1284 1004L1286 1012L1275 1012Z" fill="#fff" strokeWidth="2" />
        <path d="M1283 1061L1300 1059M1295 1083L1312 1081M1300 1095L1308 1118" strokeWidth="2" strokeDasharray="7 2" />
      </g>
      <g stroke="#b9b0b0" strokeWidth="1">
        <path d="M1446 825V840M1496 1037L1512 1053L1524 1047L1540 1050L1551 1070L1562 1082M1487 1063L1510 1087M1417 992L1428 1008L1442 1025L1455 1052M1405 925L1422 950" />
      </g>
    </svg>
  );
}

/* ---------- annotations over the window ---------- */

function Callout({ n, place }) {
  return (
    <div className={"absolute z-40 flex h-[175px] w-[175px] items-center justify-center rounded-xs border-4 border-black bg-white pr-2 pb-1.5 font-['Lato',sans-serif] text-[80px] leading-none text-[#ff0000] " + place}>
      {n}
    </div>
  );
}

function Annotations() {
  return (
    <>
      <svg width="1915" height="1122" className="pointer-events-none absolute top-0 left-0 z-30" aria-hidden="true">
        <g stroke="#ed7d31" strokeWidth="8"><path d="M150 75L420 125" /><path d="M178 360L300 580" /><path d="M1118 327L1380 376" /></g>
        <g fill="#ed7d31"><path d="M109 67L160 53L152 99Z" /><path d="M161 327L203 357L162 379Z" /><path d="M1075 319L1126 305L1117 351Z" /></g>
      </svg>
      <Callout n="1" place="top-[66px] left-[412px]" />
      <Callout n="2" place="top-[575px] left-[274px]" />
      <Callout n="3" place="top-[354px] left-[1376px]" />
      <span className="absolute -top-3 -left-2.5 z-40 h-7 w-7 rounded-full border-4 border-[#636363] bg-white" />
      <span className="absolute -top-3 left-[1495px] z-40 h-7 w-7 rounded-full border-4 border-[#636363] bg-white" />
      <span className="absolute top-[834px] -left-2.5 z-40 h-7 w-7 rounded-full border-4 border-[#636363] bg-white" />
    </>
  );
}

export default function App() {
  return (
    <div className="relative flex h-screen flex-col overflow-hidden bg-white font-['Open_Sans','Noto_Sans',sans-serif] text-black">
      <div className="flex h-[5px] shrink-0 border-b-2 border-[#1b1f2b]">
        <span className="w-[1320px] bg-[#465062]" />
        <span className="w-[75px] bg-[#16808a]" />
        <span className="w-[130px] bg-[#2a2a2a]" />
        <span className="w-[172px] bg-[#1f3763]" />
        <span className="flex-1 bg-[#2b4a86]" />
      </div>
      <div className="ml-0.5 flex min-h-0 flex-1 flex-col border-l-2 border-[#636363]">
        <header className="flex h-12 shrink-0 items-center gap-2 pl-[5px]">
          <svg width="25" height="25" viewBox="0 0 25 25" fill="none" aria-hidden="true">
            <path d="M18 21A10 10 0 1 1 22 15" stroke="#6aa52f" strokeWidth="4.5" />
            <path d="M14 14L22 23" stroke="#8fc043" strokeWidth="5" />
            <path d="M12 12L17 16" stroke="#f0b429" strokeWidth="4" /><circle cx="12" cy="12" r="2.5" fill="#e8742c" />
          </svg>
          <h1 className="text-lg leading-6">*Untitled Project - QGIS</h1>
        </header>
        <MenuBar />
        <Toolbars />
        <div className="mt-0.5 flex min-h-0 flex-1">
          <Layers />
          <Map />
        </div>
      </div>
      <Annotations />
    </div>
  );
}
